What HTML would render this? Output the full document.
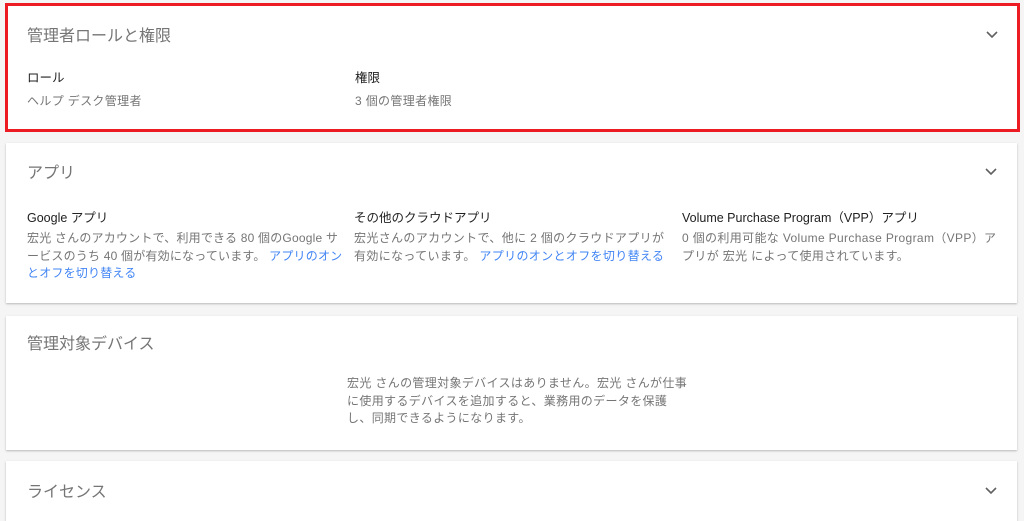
<!DOCTYPE html>
<html><head><meta charset="utf-8"><style>
body{margin:0;width:1024px;height:511px;overflow:hidden;background:#f5f5f5;font-family:"Liberation Sans","Noto Sans CJK JP",sans-serif;position:relative}
.card{position:absolute;left:6px;width:1011px;background:#fff;box-shadow:0 1px 2px rgba(0,0,0,.25)}
.t{position:absolute;left:21px;font-size:16px;color:#757575}
.chev{position:absolute;left:979px;width:12px;height:8px}
.h{position:absolute;font-size:12.5px;color:#212121;font-weight:normal}
.b{position:absolute;font-size:12px;color:#757575;line-height:17.5px;letter-spacing:.35px}
a{color:#4285f4;text-decoration:none}
</style></head><body>
<div class="card" style="top:3px;height:129px;left:5px;width:1015px;border:3px solid #ed1c24;box-sizing:border-box;box-shadow:none">
<div class="t" style="top:16px;left:19px">管理者ロールと権限</div>
<svg class="chev" style="top:25px;left:978px" viewBox="0 0 12 8"><path d="M1 1l5 5 5-5" fill="none" stroke="#616161" stroke-width="1.6"/></svg>
<div class="h" style="left:19px;top:61px">ロール</div>
<div class="b" style="left:19px;top:87px">ヘルプ デスク管理者</div>
<div class="h" style="left:347px;top:61px">権限</div>
<div class="b" style="left:347px;top:87px">3 個の管理者権限</div>
</div>
<div class="card" style="top:143px;height:160px">
<div class="t" style="top:16px">アプリ</div>
<svg class="chev" style="top:25px" viewBox="0 0 12 8"><path d="M1 1l5 5 5-5" fill="none" stroke="#616161" stroke-width="1.6"/></svg>
<div class="h" style="left:21px;top:64px">Google アプリ</div>
<div class="b" style="left:21px;top:87px;width:320px;letter-spacing:.2px">宏光 さんのアカウントで、利用できる 80 個のGoogle サービスのうち 40 個が有効になっています。 <a>アプリのオンとオフを切り替える</a></div>
<div class="h" style="left:348px;top:64px">その他のクラウドアプリ</div>
<div class="b" style="left:348px;top:87px;width:312px">宏光さんのアカウントで、他に 2 個のクラウドアプリが有効になっています。 <a>アプリのオンとオフを切り替える</a></div>
<div class="h" style="left:676px;top:64px">Volume Purchase Program（VPP）アプリ</div>
<div class="b" style="left:676px;top:87px;width:315px">0 個の利用可能な Volume Purchase Program（VPP）アプリが 宏光 によって使用されています。</div>
</div>
<div class="card" style="top:316px;height:134px">
<div class="t" style="top:14px">管理対象デバイス</div>
<div class="b" style="left:341px;top:59px;width:345px">宏光 さんの管理対象デバイスはありません。宏光 さんが仕事<br>に使用するデバイスを追加すると、業務用のデータを保護<br>し、同期できるようになります。</div>
</div>
<div class="card" style="top:461px;height:60px">
<div class="t" style="top:17px">ライセンス</div>
<svg class="chev" style="top:26px" viewBox="0 0 12 8"><path d="M1 1l5 5 5-5" fill="none" stroke="#616161" stroke-width="1.6"/></svg>
</div>
</body></html>
